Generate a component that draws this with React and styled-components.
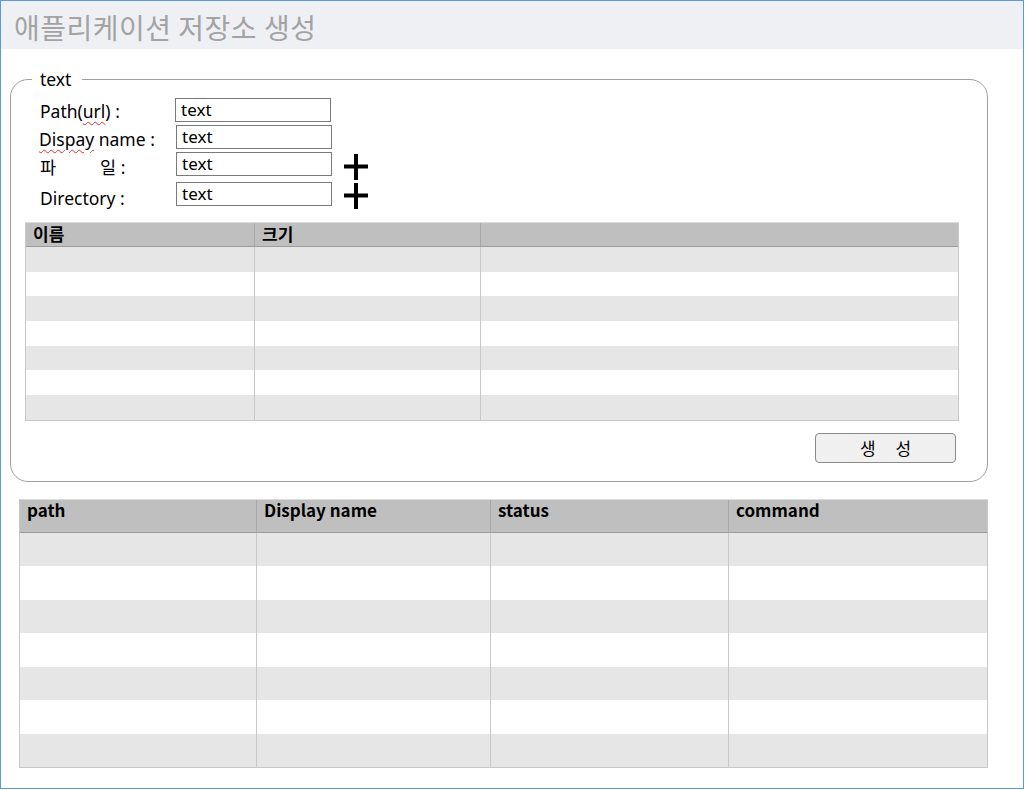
import React from 'react';
import styled, { createGlobalStyle } from 'styled-components';

const GlobalStyle = createGlobalStyle`
  html, body {
    margin: 0;
    padding: 0;
    background: #fff;
  }
  body {
    font-family: "Noto Sans", "Noto Sans CJK KR", sans-serif;
    color: #000;
  }
`;

const Frame = styled.div`
  box-sizing: border-box;
  width: 1024px;
  height: 789px;
  border: 1px solid #5b9bd5;
  display: flex;
  flex-direction: column;
`;

const Header = styled.div`
  box-sizing: border-box;
  height: 48px;
  background: #eff0f4;
  display: flex;
  align-items: center;
  padding: 3px 0 0 13px;
`;

const Title = styled.h1`
  margin: 0;
  font-family: "Noto Sans CJK KR", sans-serif;
  font-weight: 400;
  font-size: 28px;
  color: #a3a3a3;
  letter-spacing: 0.5px;
`;

const Body = styled.div`
  padding: 20px 35px 0 9px;
  display: flex;
  flex-direction: column;
`;

const Group = styled.fieldset`
  margin: 0;
  padding: 9px 28px 18px 14px;
  border: 1px solid #a0a0a0;
  border-radius: 18px;
  min-width: 0;
`;

const Legend = styled.legend`
  margin-left: 7px;
  padding: 0 11px 0 8px;
  font-size: 17.5px;
  line-height: 20px;
`;

const Form = styled.div`
  display: grid;
  grid-template-columns: 135px 158px 40px;
  grid-auto-rows: 27px;
  padding-left: 15px;
  align-items: start;
`;

const Label = styled.span`
  font-size: 17.5px;
  line-height: 24px;
  padding-top: ${p => p.$top || 1}px;
  white-space: nowrap;
  margin-left: ${p => p.$shift || 0}px;
`;

const Squiggle = styled.span`
  text-decoration: underline wavy #e03030;
  text-decoration-thickness: 1px;
  text-underline-offset: 3px;
`;

const Spread = styled.span`
  margin-right: 44px;
`;

const Field = styled.div`
  box-sizing: border-box;
  width: 156px;
  height: 24px;
  border: 1px solid #7a7a7a;
  font-size: 17px;
  line-height: 22px;
  padding-left: 5px;
  margin-left: ${p => p.$shift || 0}px;
  margin-top: ${p => p.$top || 0}px;
`;

const Plus = styled.svg`
  margin: ${p => p.$top}px 0 0 11px;
  display: block;
`;

const Table = styled.div`
  display: grid;
  grid-template-columns: ${p => p.$cols};
  grid-template-rows: ${p => p.$head}px repeat(7, ${p => p.$row}px);
  border: 1px solid #c8c8c8;
  border-top-color: #dcdcdc;
  margin-top: ${p => p.$top || 0}px;
`;

const HeadCell = styled.div`
  background: #bfbfbf;
  border-bottom: 1px solid #9c9c9c;
  border-left: ${p => (p.$first ? 'none' : '1px solid #a8a8a8')};
  font-family: "Noto Sans CJK KR", "Noto Sans", sans-serif;
  font-weight: 700;
  font-size: 17px;
  line-height: ${p => p.$lh}px;
  padding-left: 7px;
  white-space: nowrap;
`;

const Cell = styled.div`
  background: ${p => (p.$shade ? '#e6e6e6' : '#fff')};
  border-left: ${p => (p.$first ? 'none' : '1px solid #c8c8c8')};
`;

const Actions = styled.div`
  display: flex;
  justify-content: flex-end;
  padding-right: 3px;
  margin-top: 12px;
`;

const Button = styled.button`
  box-sizing: border-box;
  width: 141px;
  height: 30px;
  background: #f0f0f0;
  border: 1px solid #8a8a8a;
  border-radius: 4px;
  font-family: "Noto Sans CJK KR", sans-serif;
  font-size: 17px;
  word-spacing: 16px;
  color: #000;
  padding: 0;
`;

const BottomTable = styled(Table)`
  margin-left: 9px;
  margin-top: 17px;
`;

function PlusIcon({ top }) {
  return (
    <Plus $top={top} width="24" height="26" viewBox="0 0 24 26">
      <rect x="0" y="10.5" width="24" height="4" fill="#000" />
      <rect x="10" y="0" width="4" height="26" fill="#000" />
    </Plus>
  );
}

function Grid({ heads, cols, head, row, lh, top, as: Comp = Table }) {
  const rows = Array.from({ length: 7 }, (_, i) => i);
  return (
    <Comp $cols={cols} $head={head} $row={row} $top={top}>
      {heads.map((h, i) => (
        <HeadCell key={'h' + i} $first={i === 0} $lh={lh}>
          {h}
        </HeadCell>
      ))}
      {rows.map(r =>
        heads.map((_, c) => (
          <Cell key={r + '-' + c} $first={c === 0} $shade={r % 2 === 0} />
        ))
      )}
    </Comp>
  );
}

export default function App() {
  return (
    <>
      <GlobalStyle />
      <Frame>
        <Header>
          <Title>애플리케이션 저장소 생성</Title>
        </Header>
        <Body>
          <Group>
            <Legend>text</Legend>
            <Form>
              <Label>
                Path(<Squiggle>url</Squiggle>) :
              </Label>
              <Field>text</Field>
              <span />
              <Label $shift={-1} $top={2}>
                <Squiggle>Dispay</Squiggle> name :
              </Label>
              <Field $shift={1}>text</Field>
              <span />
              <Label $top={3}>
                <Spread>파</Spread>일 :
              </Label>
              <Field $shift={1}>text</Field>
              <PlusIcon top={2} />
              <Label $top={7}>Directory :</Label>
              <Field $shift={1} $top={3}>text</Field>
              <PlusIcon top={4} />
            </Form>
            <Grid
              heads={['이름', '크기', '']}
              cols="228px 226px 1fr"
              head={24}
              row={24.7}
              lh={22}
              top={16}
            />
            <Actions>
              <Button>생 성</Button>
            </Actions>
          </Group>
          <Grid
            as={BottomTable}
            heads={['path', 'Display name', 'status', 'command']}
            cols="236px 234px 238px 1fr"
            head={33}
            row={33.5}
            lh={20}
          />
        </Body>
      </Frame>
    </>
  );
}
